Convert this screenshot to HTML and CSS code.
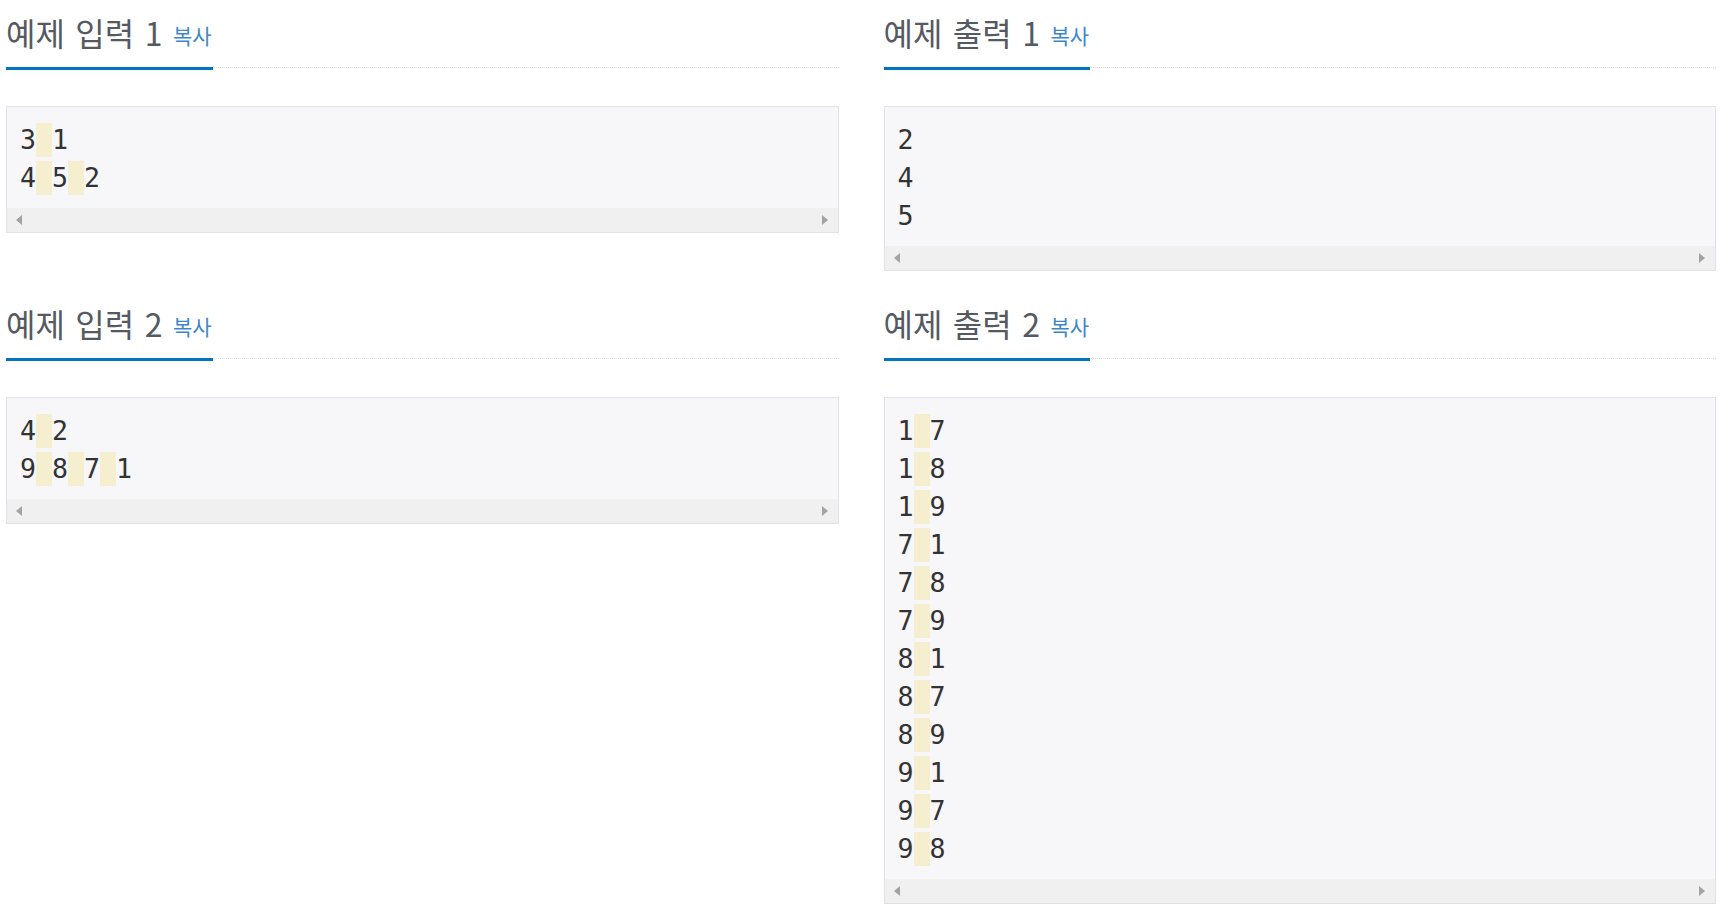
FILE: index.html
```html
<!DOCTYPE html>
<html lang="ko">
<head>
<meta charset="utf-8">
<title>예제</title>
<link rel="stylesheet" href="styles.css">
</head>
<body>
<div class="samples">
  <section class="sample">
    <div class="headline"><h2>예제 입력 1 <button class="copy">복사</button></h2></div>
    <div class="box">
      <pre class="data">3<span class="ws"> </span>1
4<span class="ws"> </span>5<span class="ws"> </span>2</pre>
      <div class="scrollbar"><span class="arrow left"></span><span class="arrow right"></span></div>
    </div>
  </section>
  <section class="sample">
    <div class="headline"><h2>예제 출력 1 <button class="copy">복사</button></h2></div>
    <div class="box">
      <pre class="data">2
4
5</pre>
      <div class="scrollbar"><span class="arrow left"></span><span class="arrow right"></span></div>
    </div>
  </section>
  <section class="sample">
    <div class="headline"><h2>예제 입력 2 <button class="copy">복사</button></h2></div>
    <div class="box">
      <pre class="data">4<span class="ws"> </span>2
9<span class="ws"> </span>8<span class="ws"> </span>7<span class="ws"> </span>1</pre>
      <div class="scrollbar"><span class="arrow left"></span><span class="arrow right"></span></div>
    </div>
  </section>
  <section class="sample">
    <div class="headline"><h2>예제 출력 2 <button class="copy">복사</button></h2></div>
    <div class="box">
      <pre class="data">1<span class="ws"> </span>7
1<span class="ws"> </span>8
1<span class="ws"> </span>9
7<span class="ws"> </span>1
7<span class="ws"> </span>8
7<span class="ws"> </span>9
8<span class="ws"> </span>1
8<span class="ws"> </span>7
8<span class="ws"> </span>9
9<span class="ws"> </span>1
9<span class="ws"> </span>7
9<span class="ws"> </span>8</pre>
      <div class="scrollbar"><span class="arrow left"></span><span class="arrow right"></span></div>
    </div>
  </section>
</div>
</body>
</html>
```
FILE: styles.css
```css
html, body {
  margin: 0;
  padding: 0;
  background: #ffffff;
}

body {
  font-family: "Noto Sans CJK KR", "Noto Sans", sans-serif;
}

.samples {
  display: grid;
  grid-template-columns: 1fr 1fr;
  column-gap: 45px;
  row-gap: 34px;
  align-items: start;
  padding: 14px 6px 0 6px;
}

.headline {
  border-bottom: 1px dotted #dcdcdc;
  margin-bottom: 38px;
}

.headline h2 {
  display: inline-block;
  margin: 0 0 -3px 0;
  padding-bottom: 17px;
  border-bottom: 3px solid #0076c0;
  font-family: "Noto Sans CJK KR", "Noto Sans", sans-serif;
  font-size: 32px;
  line-height: 36px;
  font-weight: 400;
  word-spacing: 1.5px;
  color: #555a62;
}

.copy {
  border: none;
  background: none;
  padding: 0 1px 0 0;
  margin: 0;
  font-family: "Noto Sans CJK KR", "Noto Sans", sans-serif;
  font-size: 21px;
  line-height: 1;
  word-spacing: normal;
  color: #3d87c9;
  vertical-align: 2px;
  cursor: pointer;
}

.box {
  border: 1px solid #e1e1e8;
  background: #f7f7f9;
}

.data {
  margin: 0;
  padding: 14px 13px 11px 13px;
  font-family: "DejaVu Sans Mono", "Liberation Mono", monospace;
  font-size: 26.6px;
  line-height: 38px;
  color: #333333;
}

.ws {
  background: #f6efcf;
  padding: 1.5px 0;
}

.scrollbar {
  height: 24px;
  background: #f0f0f0;
  display: flex;
  align-items: center;
  justify-content: space-between;
  padding: 0 10px 0 9px;
}

.arrow {
  width: 0;
  height: 0;
  border-top: 5.5px solid transparent;
  border-bottom: 5.5px solid transparent;
}

.arrow.left {
  border-right: 6px solid #a3a3a3;
}

.arrow.right {
  border-left: 6px solid #a3a3a3;
}
```
